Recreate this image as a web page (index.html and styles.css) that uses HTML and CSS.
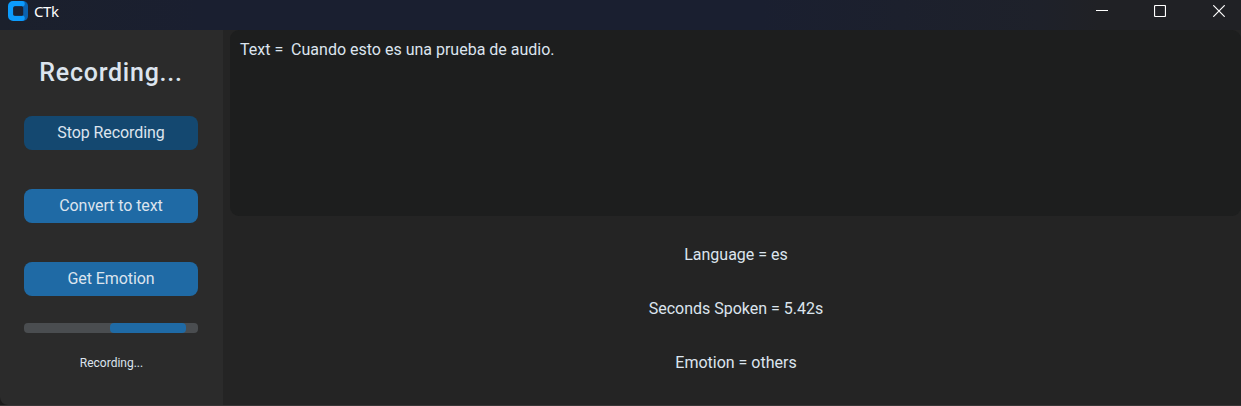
FILE: index.html
```html
<!DOCTYPE html>
<html lang="es">
<head>
<meta charset="utf-8">
<title>CTk</title>
<link rel="stylesheet" href="styles.css">
</head>
<body>
<div class="window">
  <header class="titlebar">
    <svg class="logo" width="20" height="20" viewBox="0 0 20 20">
      <path d="M14 0H15A5 5 0 0 1 20 5V15A5 5 0 0 1 15 20H14Z" fill="#0a62b0"/>
      <path d="M5 0H14A2.500 2.500 0 0 1 14 5.500H7.500Q5.500 5.500 5.500 7.500V12.500Q5.500 14.500 7.500 14.500H14A2.500 2.500 0 0 1 14 20H5A5 5 0 0 1 0 15V5A5 5 0 0 1 5 0Z" fill="#0c9bfd"/>
      <rect x="5.200" y="5.200" width="10" height="9.600" rx="1.500" fill="#1b2233"/>
    </svg>
    <span class="title">CTk</span>
    <div class="controls">
      <svg width="12" height="12" viewBox="0 0 12 12"><path d="M0 5.500H12" stroke="#fff"/></svg>
      <svg width="12" height="12" viewBox="0 0 12 12"><rect x=".5" y=".5" width="11" height="11" rx="1" fill="none" stroke="#fff" stroke-width="1.200"/></svg>
      <svg width="12" height="12" viewBox="0 0 12 12"><path d="M.3 .3L11.700 11.700M11.700 .3L.3 11.700" stroke="#fff" stroke-width="1.200"/></svg>
    </div>
  </header>
  <div class="content">
    <aside class="sidebar">
      <h1 class="heading">Recording...</h1>
      <button class="button pressed">Stop Recording</button>
      <button class="button">Convert to text</button>
      <button class="button">Get Emotion</button>
      <div class="progress"><div class="progress-fill"></div></div>
      <div class="status">Recording...</div>
    </aside>
    <main class="main">
      <div class="textbox">Text =  Cuando esto es una prueba de audio.</div>
      <div class="labels">
        <div class="label">Language = es</div>
        <div class="label">Seconds Spoken = 5.42s</div>
        <div class="label">Emotion = others</div>
      </div>
    </main>
  </div>
  <div class="edge"></div>
</div>
</body>
</html>
```

FILE: styles.css
```css
* { box-sizing: border-box; }
body { margin: 0; background: #1b1b1b; }
.window {
  width: 1241px;
  height: 406px;
  display: flex;
  flex-direction: column;
  overflow: hidden;
  font-family: Roboto, sans-serif;
  font-size: 16px;
  color: #dce4ee;
}
.titlebar {
  height: 30px;
  flex: none;
  display: flex;
  align-items: flex-start;
  padding: 1px 16px 0 8px;
  background: linear-gradient(90deg, #1b202c 0, #1a1f30 200px, #1a1f30 760px, #1e212a 1040px, #202125 1100px);
}
.title {
  margin: 2px 0 0 6px;
  font: 15px/16px "Noto Sans", sans-serif;
  letter-spacing: -.4px;
  color: #fff;
}
.controls { display: flex; gap: 46px; margin: 4px 0 0 auto; }
.controls svg:nth-child(-n+2) { margin-left: -1px; margin-right: 1px; }
.content { display: flex; height: 375px; flex: none; }
.sidebar {
  width: 223px;
  padding: 28px 25px 0 24px;
  background: #2b2b2b;
  border-bottom-left-radius: 8px;
}
.heading {
  margin: 0 0 28px;
  font-size: 25px;
  line-height: 30px;
  font-weight: 500;
  letter-spacing: .75px;
  text-align: center;
  white-space: nowrap;
}
.button {
  display: block;
  width: 174px;
  height: 34px;
  margin: 0 0 39px;
  padding: 0 0 1px;
  border: 0;
  border-radius: 8px;
  background: #1f6aa5;
  color: #dce4ee;
  font: 16px/33px Roboto, sans-serif;
  letter-spacing: -.07px;
}
.pressed { background: #144870; }
.progress {
  height: 10px;
  margin-top: -12px;
  padding-left: 86px;
  border-radius: 4px;
  background: #4a4d50;
}
.progress-fill { width: 76px; height: 10px; border-radius: 4px; background: #1f6aa5; }
.status { margin-top: 22px; padding-left: 1px; font-size: 12px; line-height: 16px; text-align: center; }
.main { flex: 1; padding-left: 7px; background: #242424; }
.textbox {
  height: 186px;
  padding: 10px;
  border-radius: 9px;
  background: #1d1e1e;
  line-height: 20px;
  white-space: pre;
}
.labels {
  padding: 29px 0 0 1px;
  display: flex;
  flex-direction: column;
  align-items: center;
  gap: 34px;
  line-height: 20px;
}
.edge { height: 1px; background: #393637; }
```
